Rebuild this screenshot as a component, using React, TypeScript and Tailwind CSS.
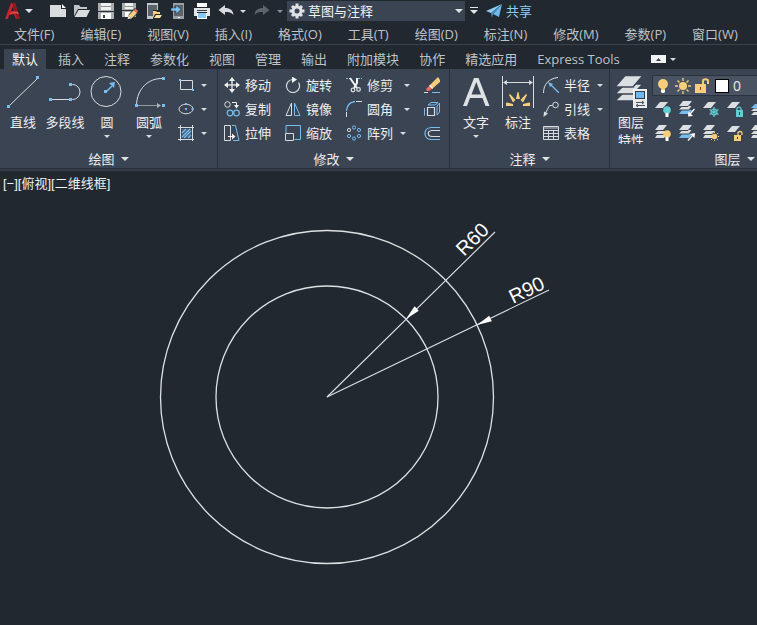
import type { ReactNode } from "react";

const FG = "#d8dcdf";
const BLUE = "#78bdf0";
const YELLOW = "#f7cf7c";
const TEAL = "#62cdd2";

const MENUS = ["文件(F)", "编辑(E)", "视图(V)", "插入(I)", "格式(O)", "工具(T)", "绘图(D)", "标注(N)", "修改(M)", "参数(P)", "窗口(W)"];

const TABS = ["默认", "插入", "注释", "参数化", "视图", "管理", "输出", "附加模块", "协作", "精选应用", "Express Tools"];

function Caret({ className = "text-[#d8dcdf]" }: { className?: string }) {
    return (
        <svg width="6" height="3" viewBox="0 0 6 3" className={`shrink-0 ${className}`} aria-hidden="true">
            <path d="M0 0H6L3 3Z" fill="currentColor" />
        </svg>
    );
}

function BigCaret() {
    return (
        <svg width="8" height="4" viewBox="0 0 8 4" className="shrink-0" aria-hidden="true">
            <path d="M0 0H8L4 4Z" fill="#dfe3e6" />
        </svg>
    );
}

function Icon({ size = 16, children }: { size?: number; children: ReactNode }) {
    return (
        <svg width={size} height={size} viewBox={`0 0 ${size} ${size}`} fill="none" stroke={FG} className="shrink-0" aria-hidden="true">
            {children}
        </svg>
    );
}

function Dot({ x, y, s = 3 }: { x: number; y: number; s?: number }) {
    return <rect x={x - s / 2} y={y - s / 2} width={s} height={s} fill={BLUE} stroke="none" />;
}

/* ---------- quick access icons ---------- */

const quickIcons: { name: string; icon: ReactNode }[] = [
    {
        name: "新建",
        icon: (
            <g stroke="none">
                <path d="M0 2H11V6H16V14H0Z" fill="#d9dcdd" />
                <path d="M12 1L16 5H12Z" fill="#f4f6f6" />
            </g>
        ),
    },
    {
        name: "打开",
        icon: (
            <g stroke="none" fill="#d9dcdd">
                <path d="M0 2H5L6.500 4H13V6H4L0 13Z" fill="#bfc4c6" />
                <path d="M4.500 7H16L12.500 14H0.500Z" />
            </g>
        ),
    },
    {
        name: "保存",
        icon: (
            <g stroke="none">
                <path d="M0 0H16V16H0Z" fill="#a9adb0" />
                <path d="M3 0H13V7H3Z" fill="#eef0f0" />
                <path d="M3 3H13V4H3Z" fill="#8d9295" />
                <path d="M3 10H13V16H3Z" fill="#fff" />
                <path d="M5 12H7V15H5Z" fill="#39414b" />
                <path d="M0 8H16V9H0Z" fill="#2c343d" />
            </g>
        ),
    },
    {
        name: "另存为",
        icon: (
            <g stroke="none">
                <path d="M0 0H14V14H0Z" fill="#a9adb0" />
                <path d="M3 0H11V6H3Z" fill="#eef0f0" />
                <path d="M3 3H11V4H3Z" fill="#8d9295" />
                <path d="M3 9H9V14H3Z" fill="#fff" />
                <path d="M0 7H14V8H0Z" fill="#2c343d" />
                <path d="M13 5L17 9L10 16L5 17L7 11Z" fill="#212830" />
                <path d="M12 7L15 10L9.500 15.500L6.500 12.500Z" fill={YELLOW} />
                <path d="M13.500 5.500L16 8L15 10L12 7Z" fill="#ee6b62" />
                <path d="M6.500 12.500L9.500 15.500L5.500 16Z" fill="#f1ead7" />
            </g>
        ),
    },
    {
        name: "从移动设备打开",
        icon: (
            <g stroke="none">
                <path d="M1 0H12V16H1Z" fill="#c4c8ca" />
                <path d="M2 2H11V13H2Z" fill="#5c6469" />
                <path d="M7 7H16V16H7Z" fill="#212830" />
                <path d="M7 8H10L11 9H14V11H9L7 15Z" fill={YELLOW} />
                <path d="M10 12H16L14 15H8Z" fill="#ffe2a0" />
            </g>
        ),
    },
    {
        name: "保存到移动设备",
        icon: (
            <g stroke="none">
                <path d="M3 0H14V16H3Z" fill="#9ba1a4" />
                <path d="M4 2H13V13H4Z" fill="#5c6469" />
                <path d="M8 14H10V15H8Z" fill="#fff" />
                <path d="M1 5H6V2L11 6.500L6 11V8H1Z" fill="#7ec4f5" stroke="#212830" strokeWidth="0.500" />
            </g>
        ),
    },
    {
        name: "打印",
        icon: (
            <g stroke="none">
                <path d="M3 0H13V4H3Z" fill="#fff" />
                <path d="M0 5H16V13H13V9H3V13H0Z" fill="#e3e6e7" />
                <path d="M3 7H13V8H3Z" fill="#3b434c" />
                <path d="M3 10H13V16H3Z" fill="#fff" />
                <path d="M4 10H12V15H4Z" fill="#86c9f7" />
            </g>
        ),
    },
];

function QuickIcon({ name, children }: { name: string; children: ReactNode }) {
    return (
        <button type="button" aria-label={name} className="h-4 w-4 shrink-0">
            <Icon>{children}</Icon>
        </button>
    );
}

function Undo({ color }: { color: string }) {
    return <path d="M0.500 7L7 2V5C12 5 15 7 15.500 12C13.500 9.500 11 9 7 9V12Z" fill={color} stroke="none" />;
}

function Gear() {
    return (
        <Icon>
            <g stroke="#dfe2e4" strokeWidth="3">
                <path d="M8 0.500V15.500M0.500 8H15.500M3 3L13 13M13 3L3 13" />
            </g>
            <circle cx="8" cy="8" r="4" stroke="#dfe2e4" strokeWidth="3" fill="#3b4453" />
        </Icon>
    );
}

/* ---------- ribbon icons ---------- */

const bigIcons = {
    line: (
        <>
            <path d="M3 31L32 3" />
            <Dot x={2.5} y={31.5} />
            <Dot x={31.5} y={2.5} />
        </>
    ),
    polyline: (
        <>
            <path d="M2 24.500H24.500A7.500 7.500 0 0 0 24.500 9.500H22" />
            <Dot x={2.5} y={24.5} />
            <Dot x={22.5} y={24.5} />
            <Dot x={22.5} y={9.5} />
        </>
    ),
    circle: (
        <>
            <circle cx="16" cy="16.500" r="15" />
            <path d="M16 17L22 11" stroke={BLUE} strokeWidth="1.500" />
            <path d="M25 7L24 13L19 8Z" fill={BLUE} stroke="none" />
            <Dot x={15.5} y={16.5} />
        </>
    ),
    arc: (
        <>
            <path d="M4.500 30C5 14 16 3 31 3.500" />
            <path d="M5 30.500H26" stroke="#949ba3" />
            <path d="M25 28L29 30.500L25 33Z" fill="#aab0b6" stroke="none" />
            <Dot x={4.5} y={30.5} />
            <Dot x={31.5} y={30.5} />
            <Dot x={31.5} y={3.5} />
        </>
    ),
    text: (
        <path
            d="M4 31L15 3H19.500L30.500 31H26.500L23.500 23H11L8 31ZM12.500 19.500H22L17.300 7Z"
            fill="#dfe2e4"
            fillRule="evenodd"
            stroke="none"
        />
    ),
    dimension: (
        <>
            <path d="M1.500 1V33M32.500 1V33M3 7.500H31" />
            <path d="M2 7.500L6 5V10ZM32 7.500L28 5V10Z" fill={FG} stroke="none" />
            <g fill={YELLOW} stroke="none">
                <path d="M16.500 17H17.500L19 24H15Z" />
                <path d="M8 20L9 19L14.500 25L12 27.500Z" />
                <path d="M26 20L25 19L19.500 25L22 27.500Z" />
                <path d="M5 28L6 27.500L12 29V31H5Z" />
                <path d="M29 28L28 27.500L22 29V31H29Z" />
            </g>
        </>
    ),
    layers: (
        <>
            <g fill="#dcdfe1" stroke="#3b4453" strokeWidth="1.500">
                <path d="M1 26L11 16H29L19 26Z" />
                <path d="M1 19L11 9H29L19 19Z" />
                <path d="M1 12L11 0.500H29L19 12Z" />
            </g>
            <rect x="19.500" y="14.500" width="13" height="18" fill="#e7e9ea" stroke="#f4f5f5" />
            <rect x="21.500" y="16.500" width="9" height="7" fill="#6cb9f1" stroke="#35404b" />
            <path d="M22 27.500H29M28 26L30 27.500L28 29M31 30.500H23M24 29L22 30.500L24 32" stroke="#4b5560" />
        </>
    ),
};

const move = (
    <>
        <path d="M8 2V14M2 8H14" strokeWidth="1.500" />
        <path d="M8 0L11 4H5ZM8 16L11 12H5ZM0 8L4 5V11ZM16 8L12 5V11Z" fill="#f0f2f3" stroke="none" />
    </>
);

const copy = (
    <>
        <circle cx="3.500" cy="3.500" r="2.800" />
        <circle cx="6" cy="12" r="2.800" stroke={BLUE} strokeWidth="1.200" />
        <circle cx="12.500" cy="12" r="2.800" stroke={BLUE} strokeWidth="1.200" />
        <path d="M8 1.500H12.500V5" stroke="#f0f2f3" />
        <path d="M10 4H15L12.500 7.500Z" fill="#f0f2f3" stroke="none" />
    </>
);

const stretch = (
    <>
        <path d="M0.500 0.500H6.500V15.500H0.500Z" />
        <path d="M8 0.500H11.500L15 15.500H9" stroke={BLUE} />
        <path d="M4 11.500H9" stroke="#f0f2f3" />
        <path d="M8 8.500L11.500 11.500L8 14.500Z" fill="#f0f2f3" stroke="none" />
    </>
);

const rotate = (
    <>
        <path d="M8 2.500A6.500 6.500 0 1 0 13.500 5.500" strokeWidth="1.200" />
        <path d="M7 -0.500L12 2.500L7 6Z" fill="#f0f2f3" stroke="none" />
    </>
);

const mirror = (
    <>
        <path d="M6.500 2V14.500H1Z" />
        <path d="M9.500 2V14.500H15Z" stroke={BLUE} />
    </>
);

const scale = (
    <>
        <path d="M1 8V0.500H15.500V14.500H9.500" stroke={BLUE} />
        <path d="M0.500 8.500H8.500V15.500H0.500Z" />
    </>
);

const trim = (
    <>
        <path d="M0 1.500H5M12 1.500H16" stroke={BLUE} strokeDasharray="2 1" />
        <path d="M4 1L11 11M11 1V6L8 11" stroke="#f0f2f3" strokeWidth="2" />
        <circle cx="7" cy="13" r="1.800" strokeWidth="1.300" />
        <circle cx="12.500" cy="12.500" r="1.800" strokeWidth="1.300" />
    </>
);

const fillet = (
    <>
        <path d="M0.500 10C1 4 4 1 9 0.500" stroke={BLUE} strokeWidth="1.300" />
        <path d="M10 0.500H16M0.500 11V16" />
    </>
);

const arrayIcon = (
    <>
        <g stroke={BLUE}>
            <circle cx="8" cy="2.500" r="1.600" />
            <circle cx="13" cy="5" r="1.600" />
            <circle cx="13" cy="11" r="1.600" />
            <circle cx="8" cy="13.500" r="1.600" />
            <circle cx="3" cy="11" r="1.600" />
        </g>
        <circle cx="3" cy="5" r="1.600" />
    </>
);

const erase = (
    <>
        <path d="M14 0L16 3V5L8 12L5 9Z" fill={YELLOW} stroke="none" />
        <path d="M6 8L9 11L8 12L5 9Z" fill="#fff" stroke="none" />
        <path d="M5 9L8 12L5 14H3L2 12Z" fill="#ee6b5f" stroke="none" />
        <path d="M0 15.500H4" />
        <path d="M8 15.500H16" stroke={BLUE} />
    </>
);

const explode = (
    <>
        <path d="M3.500 6.500H10.500V14.500H3.500Z" strokeWidth="1.200" />
        <path d="M0.500 7V14.500M13 5L15.500 2V11L13 14ZM4 4L7 1.500H14L11 4Z" stroke={BLUE} />
    </>
);

const offset = (
    <>
        <path d="M16 2.500H7C-1 3 -1 14 7 14.500H16" stroke={BLUE} strokeWidth="1.200" />
        <path d="M16 5.500H8C3 6 3 11 8 11.500H16" strokeWidth="1.200" />
    </>
);

const radius = (
    <>
        <path d="M0.500 16C0.500 7 6 1.500 15 0.500" />
        <path d="M7 7L16 16" stroke={BLUE} strokeWidth="1.300" />
        <path d="M5 5L10 7L7 10Z" fill={BLUE} stroke="none" />
    </>
);

const leader = (
    <>
        <circle cx="12.500" cy="4" r="2.800" />
        <path d="M9.500 4.500H6.500L2 13" />
        <path d="M0.500 16L1 10.500L5 12.500Z" fill={FG} stroke="none" />
    </>
);

const tableIcon = (
    <>
        <path d="M0.500 1.500H15.500V14.500H0.500ZM0.500 5.500H15.500M0.500 8.500H15.500M0.500 11.500H15.500M5.500 5V14M10.500 5V14" />
        <path d="M1 2H15V4H1Z" fill="#7b838c" stroke="none" />
    </>
);

const rectIcon = (
    <>
        <path d="M2.500 3.500H14.500V12.500H2.500Z" />
        <Dot x={2} y={3} s={2} />
        <Dot x={15} y={13} s={2} />
    </>
);

const ellipseIcon = (
    <>
        <ellipse cx="8" cy="8" rx="7" ry="4.800" />
        <Dot x={8} y={8} s={2} />
        <Dot x={8} y={3} s={2} />
        <Dot x={14.5} y={8} s={2} />
    </>
);

const hatchIcon = (
    <>
        <path d="M4 4H13V13H4Z" fill="#476280" stroke="none" />
        <path d="M4 8L8 4M4 12L12 4M6 13L13 6M10 13L13 10" stroke={BLUE} strokeWidth="1.200" />
        <path d="M2.500 0V16M14.500 0V16M0 2.500H16M0 14.500H16" />
    </>
);

/* layer tool glyphs share the sheet shapes */
const sheet = <path d="M0 7L5 1H13L8 7Z" fill="#dcdfe1" stroke="none" />;
const sheets = (
    <g stroke="none">
        <path d="M0 13L3 9H13L10 13Z" fill={BLUE} />
        <path d="M0 9L3 5H13L10 9Z" fill="#dcdfe1" />
        <path d="M0 9H10L13 5M0 5.500H9L13 1" stroke="#3b4453" />
        <path d="M0 5L4 0H13L9 5Z" fill="#dcdfe1" />
    </g>
);
const graySheets = (
    <g stroke="none" fill="#dcdfe1">
        <path d="M0 13L2 10H11L9 13Z" />
        <path d="M0 9L3 6H12L9 9Z" />
        <path d="M0 5L4 0H12L8 5Z" />
    </g>
);

function Bulb({ color, small }: { color: string; small?: boolean }) {
    return small ? (
        <g stroke="none">
            <circle cx="12" cy="9" r="3.800" fill={color} />
            <path d="M10.500 12H13.500V16H10.500Z" fill="#fff" />
        </g>
    ) : (
        <g stroke="none">
            <circle cx="8" cy="6" r="5" fill={color} />
            <path d="M6 9H10V12H6Z" fill={color} />
            <path d="M6 12H10V14L9 15H7L6 14Z" fill="#fff" />
        </g>
    );
}

const layerTools: { name: string; icon: ReactNode }[] = [
    { name: "关", icon: <>{sheet}<Bulb small color={TEAL} /></> },
    { name: "隔离", icon: <>{sheets}<path d="M15.500 8L11 13" stroke="#fff" strokeWidth="1.300" /><path d="M9 15.500L9.500 10.500L14 15Z" fill="#fff" stroke="none" /></> },
    { name: "冻结", icon: <>{sheet}<g stroke={TEAL} strokeWidth="1.200"><circle cx="11" cy="11" r="3" /><path d="M11 6V16M6.500 8.500L15.500 13.500M15.500 8.500L6.500 13.500" /></g></> },
    { name: "锁定", icon: <>{sheet}<path d="M10 10V8C10 5.500 14 5.500 14 8V10" stroke={TEAL} strokeWidth="1.300" /><path d="M9 9H16V16H9Z" fill={TEAL} stroke="none" /><path d="M12 11H13V14H12Z" fill="#35404b" stroke="none" /></> },
    { name: "置为当前", icon: <><path d="M0 7L4 3H12L10 7Z" fill={BLUE} stroke="none" /><path d="M0 10L3 7.500H12V10ZM0 14L3 11H12V14Z" fill="#dcdfe1" stroke="none" /></> },
    { name: "打开所有图层", icon: <>{graySheets}<Bulb small color={YELLOW} /></> },
    { name: "取消隔离", icon: <>{sheets}<path d="M9 15.500L13 11" stroke="#fff" strokeWidth="1.300" /><path d="M16 8L15.500 13L11 9Z" fill="#fff" stroke="none" /></> },
    { name: "解冻所有图层", icon: <>{graySheets}<circle cx="11.500" cy="11.500" r="2.800" fill={YELLOW} stroke="none" /><path d="M11.500 6.500V16.500M6.500 11.500H16.500M8 8L15 15M15 8L8 15" stroke={YELLOW} strokeDasharray="1.500 7" /></> },
    { name: "解锁", icon: <>{sheet}<path d="M11 10V8C11 6 15 6 15 8V10" stroke={YELLOW} strokeWidth="1.300" /><path d="M7 10H14V16H7Z" fill={YELLOW} stroke="none" /><path d="M10 12H11V14H10Z" fill="#35404b" stroke="none" /></> },
    { name: "更改为当前图层", icon: <>{graySheets}</> },
];

/* ---------- ribbon building blocks ---------- */

function BigTool({ icon, label, caret }: { icon: ReactNode; label: string; caret?: boolean }) {
    return (
        <button type="button" className="flex w-[42px] shrink-0 flex-col items-center">
            <Icon size={34}>{icon}</Icon>
            <span className="leading-[26px] whitespace-nowrap">{label}</span>
            {caret && <Caret />}
        </button>
    );
}

function Tool({ icon, label, name, caret, wide }: { icon: ReactNode; label?: string; name?: string; caret?: boolean; wide?: boolean }) {
    return (
        <button type="button" aria-label={name} className="flex h-6 items-center whitespace-nowrap">
            <Icon>{icon}</Icon>
            {label && <span className="ml-[5px]">{label}</span>}
            {caret && <span className={wide ? "ml-[11px]" : "ml-[7px]"}><Caret /></span>}
        </button>
    );
}

function Panel({ title, className, children }: { title: string; className: string; children: ReactNode }) {
    return (
        <section aria-label={title} className={`flex shrink-0 flex-col border-r border-[#29303b] ${className}`}>
            <div className="flex h-20 items-start">{children}</div>
            <button type="button" className="flex h-[19px] items-center justify-center gap-[6px]">
                {title}
                <BigCaret />
            </button>
        </section>
    );
}

function QuickAccess() {
    return (
        <div className="flex h-[22px] items-center">
            <button type="button" aria-label="应用程序菜单" className="ml-1 flex items-center gap-1">
                <svg width="17" height="18" viewBox="0 0 17 18" aria-hidden="true">
                    <path d="M1 17L7 1H11L16 17H12L10 12L5 13L4 17Z" fill="#c9252d" />
                    <path d="M7 9L9 4L10 9Z" fill="#212830" />
                    <path d="M11 1L16 17H13L8 1Z" fill="#8c1a20" />
                    <path d="M5 13C8 11 11 11 15 12L14 10C10 9 7 10 5 13Z" fill="#ef4a4f" />
                </svg>
                <BigCaret />
            </button>
            <div className="ml-[17px] flex items-center gap-2">
                {quickIcons.map((q) => (
                    <QuickIcon key={q.name} name={q.name}>{q.icon}</QuickIcon>
                ))}
                <QuickIcon name="放弃"><Undo color="#d9dcde" /></QuickIcon>
            </div>
            <span className="ml-[6px]"><Caret /></span>
            <span className="ml-2 flex -scale-x-100">
                <QuickIcon name="重做"><Undo color="#5c646d" /></QuickIcon>
            </span>
            <span className="ml-[7px]"><Caret className="text-[#8b9198]" /></span>
            <label className="ml-1 flex h-5 w-[178px] items-center bg-[#3b4453] px-[2px] text-[#f0f2f3]">
                <Gear />
                <select aria-label="工作空间" className="ml-[3px] h-5 flex-1 appearance-none bg-transparent outline-none">
                    <option>草图与注释</option>
                </select>
                <BigCaret />
            </label>
            <button type="button" aria-label="自定义快速访问工具栏" className="ml-[5px]">
                <svg width="8" height="8" viewBox="0 0 8 8" aria-hidden="true">
                    <path d="M0 0H8V1H0ZM0 3H8L4 7Z" fill="#e3e6e8" />
                </svg>
            </button>
            <button type="button" className="ml-2 flex items-center gap-1 text-[#8fcdf5]">
                <svg width="16" height="16" viewBox="0 0 16 16" aria-hidden="true">
                    <path d="M0 8L16 1L5 10Z" fill="#8fcdf5" />
                    <path d="M16 1L13 14L7 11Z" fill="#6fb7ea" />
                    <path d="M5 10L16 1L7 11L6 15Z" fill="#4a90c4" />
                </svg>
                共享
            </button>
        </div>
    );
}

function LayerPanel() {
    return (
        <Panel title="图层" className="w-[250px]">
            <div className="h-[75px] overflow-hidden pt-[6px]">
                <button type="button" className="flex w-[42px] flex-col items-center">
                    <Icon size={34}>{bigIcons.layers}</Icon>
                    <span className="mt-1 w-7 text-center leading-[18px]">图层特性</span>
                </button>
            </div>
            <div className="flex-1 pt-[6px]">
                <label className="flex h-[21px] items-center gap-1 border border-[#2b323d] bg-[#4a5362] pl-[2px]">
                    <Icon><Bulb color={YELLOW} /></Icon>
                    <Icon>
                        <circle cx="8" cy="8" r="4" fill={YELLOW} stroke="none" />
                        <path d="M8 0V3M8 13V16M0 8H3M13 8H16M2.500 2.500L4.500 4.500M11.500 11.500L13.500 13.500M13.500 2.500L11.500 4.500M4.500 11.500L2.500 13.500" stroke={YELLOW} strokeWidth="1.300" />
                    </Icon>
                    <Icon>
                        <path d="M8 7V3C8 0.500 13 0.500 13 3V6" stroke={YELLOW} strokeWidth="2" />
                        <path d="M0 6H11V15H0Z" fill={YELLOW} stroke="none" />
                        <path d="M5 9H6V12H5Z" fill="#a8322c" stroke="none" />
                    </Icon>
                    <span className="h-[14px] w-[14px] border border-black bg-white" />
                    <select aria-label="当前图层" className="h-5 flex-1 appearance-none bg-transparent text-sm outline-none">
                        <option>0</option>
                    </select>
                </label>
                <div className="grid grid-cols-[repeat(5,16px)] gap-x-2 pt-px pl-[3px]">
                    {layerTools.map((t) => (
                        <Tool key={t.name} name={t.name} icon={t.icon} />
                    ))}
                </div>
            </div>
        </Panel>
    );
}

function Ribbon() {
    return (
        <div className="flex overflow-hidden border-b border-[#29303b] bg-[#3b4453] text-[#eceef0]">
            <Panel title="绘图" className="w-[218px]">
                <div className="flex pt-[6px] pl-[2px]">
                    <BigTool icon={bigIcons.line} label="直线" />
                    <BigTool icon={bigIcons.polyline} label="多段线" />
                    <BigTool icon={bigIcons.circle} label="圆" caret />
                    <BigTool icon={bigIcons.arc} label="圆弧" caret />
                </div>
                <div className="pt-1 pl-2">
                    <Tool icon={rectIcon} name="矩形" caret />
                    <Tool icon={ellipseIcon} name="椭圆" caret />
                    <Tool icon={hatchIcon} name="图案填充" caret />
                </div>
            </Panel>
            <Panel title="修改" className="w-[232px]">
                <div className="flex gap-[14px] pt-1 pl-[6px]">
                    <div>
                        <Tool icon={move} label="移动" />
                        <Tool icon={copy} label="复制" />
                        <Tool icon={stretch} label="拉伸" />
                    </div>
                    <div>
                        <Tool icon={rotate} label="旋转" />
                        <Tool icon={mirror} label="镜像" />
                        <Tool icon={scale} label="缩放" />
                    </div>
                    <div>
                        <Tool icon={trim} label="修剪" caret wide />
                        <Tool icon={fillet} label="圆角" caret wide />
                        <Tool icon={arrayIcon} label="阵列" caret />
                    </div>
                    <div>
                        <Tool icon={erase} name="删除" />
                        <Tool icon={explode} name="分解" />
                        <Tool icon={offset} name="偏移" />
                    </div>
                </div>
            </Panel>
            <Panel title="注释" className="w-[160px]">
                <div className="flex pt-[6px] pl-[5px]">
                    <BigTool icon={bigIcons.text} label="文字" caret />
                    <BigTool icon={bigIcons.dimension} label="标注" />
                </div>
                <div className="pt-1 pl-1">
                    <Tool icon={radius} label="半径" caret />
                    <Tool icon={leader} label="引线" caret />
                    <Tool icon={tableIcon} label="表格" />
                </div>
            </Panel>
            <LayerPanel />
        </div>
    );
}

function Drawing() {
    return (
        <svg viewBox="0 0 757 428" className="block w-full" fill="none" stroke="#dde1e3" strokeWidth="1.300" role="img" aria-label="R60 与 R90 同心圆">
            <circle cx="327" cy="200" r="166.500" />
            <circle cx="327" cy="200" r="111" />
            <path d="M327 200L495 35" strokeWidth="1.100" />
            <path d="M327 200L549 93" strokeWidth="1.100" />
            <g fill="#fff" stroke="none">
                <path d="M0 0L15 -3V3Z" transform="translate(406 122) rotate(-44.500)" />
                <path d="M0 0L15 -3V3Z" transform="translate(477 128) rotate(-25.700)" />
                <g fontSize="20" fontFamily="'Liberation Sans', sans-serif">
                    <text transform="translate(464 60) rotate(-44.500)">R60</text>
                    <text transform="translate(513 107) rotate(-25.700)">R90</text>
                </g>
            </g>
        </svg>
    );
}

export default function App() {
    return (
        <div className="flex min-h-screen flex-col overflow-hidden bg-[#212830] font-['Open_Sans','Noto_Sans_CJK_SC',sans-serif] text-[13px] leading-5 text-[#bfc3c8]">
            <header>
                <QuickAccess />
                <nav aria-label="菜单栏" className="flex h-[23px] items-center gap-[26px] overflow-hidden border-b border-[#3a424c] pt-px pl-[14px] whitespace-nowrap">
                    {MENUS.map((m) => (
                        <button type="button" key={m}>{m}</button>
                    ))}
                </nav>
                <div className="flex h-6 items-end gap-1 overflow-hidden pl-1 whitespace-nowrap">
                    {TABS.map((t, i) => (
                        <button type="button" key={t} className={i === 0 ? "h-5 bg-[#3b4453] px-2 text-[#f4f5f6]" : "h-5 px-2"}>
                            {t}
                        </button>
                    ))}
                    <button type="button" aria-label="最小化功能区" className="ml-[19px] flex h-5 items-center gap-1">
                        <svg width="15" height="8" viewBox="0 0 15 8" aria-hidden="true">
                            <path d="M0 0H15V8H0Z" fill="#f2f3f4" />
                            <path d="M5 6L7.500 3L10 6Z" fill="#39414b" />
                        </svg>
                        <Caret />
                    </button>
                </div>
            </header>
            <Ribbon />
            <div className="h-[2px] bg-[#343c49]" />
            <main className="flex-1">
                <div className="flex h-[26px] items-center pl-[3px] font-['Liberation_Sans','Noto_Sans_CJK_SC',sans-serif] text-[#f0f2f3]">
                    <button type="button">[−]</button>
                    <button type="button">[俯视]</button>
                    <button type="button">[二维线框]</button>
                </div>
                <Drawing />
            </main>
        </div>
    );
}
